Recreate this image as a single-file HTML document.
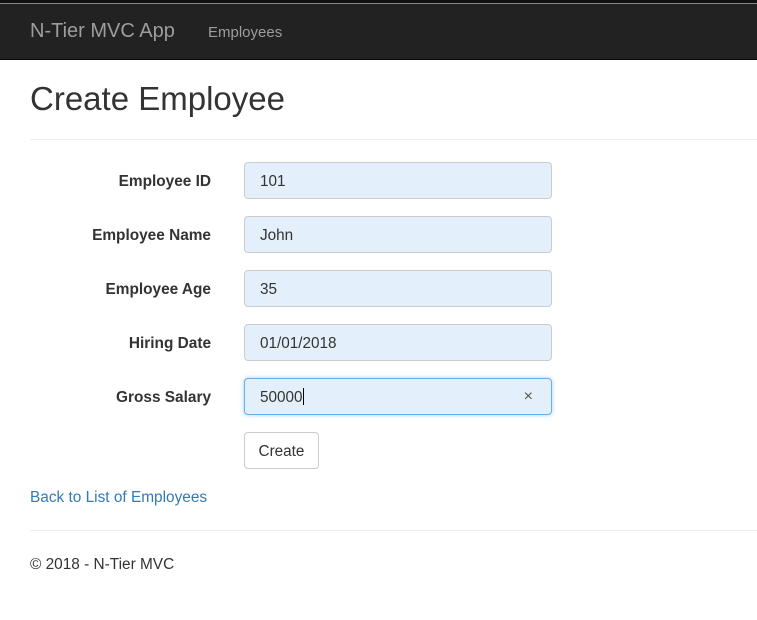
<!DOCTYPE html>
<html><head><meta charset="utf-8"><style>
*{box-sizing:border-box;margin:0;padding:0}
body{width:757px;height:620px;background:#fff;font-family:"Liberation Sans",Arial,sans-serif;font-size:15.4px;color:#333;position:relative;overflow:hidden}
.nav{position:absolute;left:0;top:0;width:757px;height:60px;background:#222;border-top:3px solid #111;border-bottom:1px solid #080808}
.nav:before{content:"";position:absolute;left:0;top:0;width:100%;height:1px;background:#888}
.brand{position:absolute;left:30px;top:17px;font-size:20px;color:#9d9d9d}
.navl{position:absolute;left:208px;top:21px;font-size:15px;color:#9d9d9d}
h2{position:absolute;left:30px;top:80px;font-size:33px;font-weight:400;color:#333}
.hr{position:absolute;left:30px;width:727px;height:1px;background:#eee}
.lbl{position:absolute;left:20px;width:191px;text-align:right;font-weight:bold;font-size:15.4px}
.inp{position:absolute;left:244px;width:308px;height:37px;background:#e3effa;border:1px solid #ccc;border-radius:4px;padding:9px 15px 0;font-size:15.3px;color:#333;line-height:19px}
.inp.f{border-color:#66afe9;box-shadow:0 0 5px rgba(102,175,233,.6)}
.btn{position:absolute;left:244px;top:432px;width:75px;height:37px;border:1px solid #ccc;border-radius:4px;background:#fff;text-align:center;line-height:37px;font-size:15.3px}
a{position:absolute;left:30px;top:489px;color:#337ab7;text-decoration:none;font-size:15.4px}
.ft{position:absolute;left:30px;top:556px;font-size:15.4px}
</style></head><body>
<div class="nav"><span class="brand">N-Tier MVC App</span><span class="navl">Employees</span></div>
<h2>Create Employee</h2>
<div class="hr" style="top:139px"></div>
<div class="lbl" style="top:173px">Employee ID</div><div class="inp" style="top:162px">101</div>
<div class="lbl" style="top:227px">Employee Name</div><div class="inp" style="top:216px">John</div>
<div class="lbl" style="top:281px">Employee Age</div><div class="inp" style="top:270px">35</div>
<div class="lbl" style="top:335px">Hiring Date</div><div class="inp" style="top:324px">01/01/2018</div>
<div class="lbl" style="top:389px">Gross Salary</div><div class="inp f" style="top:378px">50000<span style="display:inline-block;width:1px;height:17px;background:#000;vertical-align:-3px"></span><span style="position:absolute;right:18px;top:8px;color:#555;font-size:16px">×</span></div>
<div class="btn">Create</div>
<a>Back to List of Employees</a>
<div class="hr" style="top:530px"></div>
<div class="ft">© 2018 - N-Tier MVC</div>
</body></html>
